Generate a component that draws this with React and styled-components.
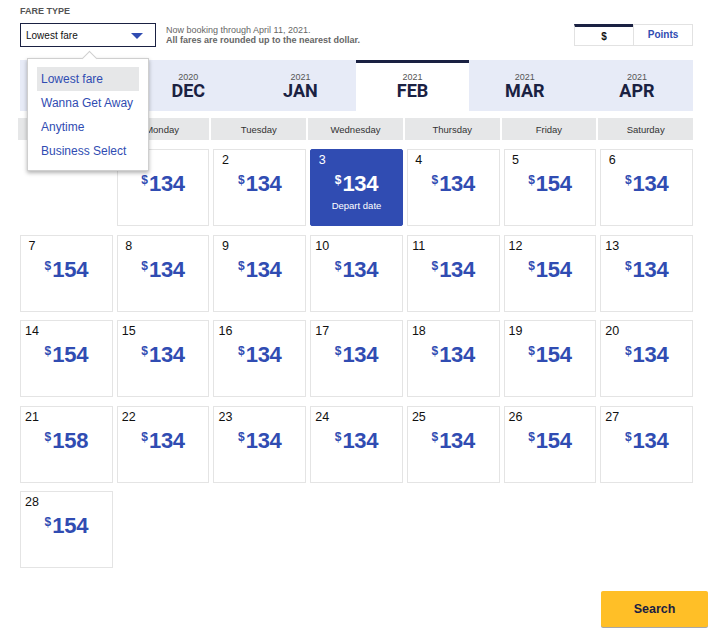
import React from "react";
import styled, { createGlobalStyle } from "styled-components";

const BLUE = "#304cb2";
const NAVY = "#1a2142";

const GlobalStyle = createGlobalStyle`
  html, body { margin: 0; padding: 0; background: #fff; }
  body { font-family: "Liberation Sans", Arial, sans-serif; color: #111; }
  * { box-sizing: border-box; }
`;

const Page = styled.div`
  width: 726px;
  padding: 6px 18px 8px 20px;
`;

const TopBar = styled.div`
  width: 673px;
  display: flex;
  justify-content: space-between;
  align-items: flex-end;
`;

const FareField = styled.div`
  display: flex;
  flex-direction: column;
`;

const FieldLabel = styled.div`
  font-size: 9px;
  line-height: 11px;
  font-weight: 700;
  color: #555;
  text-transform: uppercase;
  margin-bottom: 6px;
`;

const FieldRow = styled.div`
  display: flex;
  align-items: flex-start;
`;

const SelectWrap = styled.div`
  position: relative;
  z-index: 5;
`;

const SelectBox = styled.div`
  width: 136px;
  height: 24px;
  border: 1px solid ${NAVY};
  padding: 0 12px 0 5px;
  display: flex;
  align-items: center;
  justify-content: space-between;
  font-size: 10px;
  color: #111;
`;

const Arrow = styled.span`
  width: 0;
  height: 0;
  border-left: 6px solid transparent;
  border-right: 6px solid transparent;
  border-top: 6px solid ${BLUE};
  margin-top: 1px;
`;

const Menu = styled.ul`
  position: absolute;
  left: 7px;
  top: 35px;
  width: 122px;
  margin: 0;
  padding: 8px 9px 7px;
  list-style: none;
  background: #fff;
  border: 1px solid #cfcfcf;
  box-shadow: 0 2px 4px rgba(0, 0, 0, 0.3);

  &::before {
    content: "";
    position: absolute;
    top: -6px;
    left: 56px;
    width: 10px;
    height: 10px;
    background: #fff;
    border-top: 1px solid #cfcfcf;
    border-left: 1px solid #cfcfcf;
    transform: rotate(45deg);
  }
`;

const MenuItem = styled.li`
  height: 24px;
  line-height: 24px;
  padding-left: 4px;
  font-size: 12px;
  color: ${BLUE};
  background: ${(p) => (p.$active ? "#e6e7e8" : "transparent")};
  white-space: nowrap;
`;

const Note = styled.div`
  margin: 2px 0 0 10px;
  font-size: 9px;
  line-height: 10px;
  color: #666;
`;

const NoteStrong = styled.div`
  font-weight: 700;
`;

const Toggle = styled.div`
  display: flex;
  margin-bottom: 1px;
`;

const ToggleButton = styled.div`
  width: 60px;
  height: 22px;
  display: flex;
  align-items: center;
  justify-content: center;
  border: 1px solid #e2e2e2;
  border-top: ${(p) => (p.$active ? `3px solid ${NAVY}` : "1px solid #e2e2e2")};
  padding-bottom: ${(p) => (p.$active ? "0" : "2px")};
  margin-left: ${(p) => (p.$first ? "0" : "-1px")};
  font-size: 10px;
  font-weight: 700;
  color: ${(p) => (p.$active ? "#111" : BLUE)};
`;

const Tabs = styled.div`
  width: 673px;
  height: 51px;
  margin-top: 13px;
  display: grid;
  grid-template-columns: repeat(6, 1fr);
`;

const Tab = styled.div`
  display: flex;
  flex-direction: column;
  align-items: center;
  padding-top: 12px;
  background: ${(p) => (p.$active ? "#fff" : "#e7ebf7")};
  box-shadow: ${(p) => (p.$active ? `inset 0 3px 0 ${NAVY}` : "none")};
`;

const TabYear = styled.div`
  font-size: 9px;
  line-height: 10px;
  color: #555;
`;

const TabMonth = styled.div`
  font-family: Roboto, "Liberation Sans", Arial, sans-serif;
  font-size: 18px;
  line-height: 18px;
  font-weight: 700;
  color: ${NAVY};
`;

const WeekHeader = styled.div`
  width: 675px;
  margin: 7px 0 0 -2px;
  display: grid;
  grid-template-columns: repeat(7, 1fr);
  gap: 2px;
`;

const WeekDay = styled.div`
  height: 22px;
  background: #e6e7e8;
  display: flex;
  align-items: center;
  justify-content: center;
  font-size: 9.5px;
  color: #333;
`;

const Grid = styled.div`
  width: 673px;
  margin-top: 9px;
  display: grid;
  grid-template-columns: repeat(7, 1fr);
  column-gap: 4px;
  row-gap: 8.5px;
`;

const Cell = styled.div`
  height: 77px;
  padding-top: 3px;
  border: 1px solid ${(p) => (p.$selected ? BLUE : "#e4e4e4")};
  border-radius: ${(p) => (p.$selected ? "2px" : "0")};
  background: ${(p) => (p.$selected ? BLUE : "#fff")};
  color: ${(p) => (p.$selected ? "#fff" : "#111")};
  display: flex;
  flex-direction: column;
`;

const EmptyCell = styled.div`
  height: 77px;
`;

const DateNum = styled.div`
  width: 16px;
  margin-left: 3px;
  text-align: center;
  font-size: 12.5px;
  line-height: 14px;
`;

const Price = styled.div`
  margin-top: 5px;
  display: flex;
  justify-content: center;
  align-items: flex-start;
  color: ${(p) => (p.$selected ? "#fff" : BLUE)};
  font-weight: 700;
`;

const Dollar = styled.span`
  font-size: 12px;
  line-height: 14px;
  margin-top: 1px;
  margin-right: 1px;
`;

const Amount = styled.span`
  font-size: 22px;
  line-height: 24px;
  letter-spacing: -0.3px;
`;

const DepartLabel = styled.div`
  margin-top: 4px;
  text-align: center;
  font-size: 9.5px;
  line-height: 11px;
  color: #fff;
`;

const Footer = styled.div`
  display: flex;
  justify-content: flex-end;
  margin-top: 23px;
`;

const SearchButton = styled.button`
  width: 107px;
  height: 36px;
  border: none;
  border-radius: 2px;
  background: #ffbf27;
  box-shadow: 0 1px 0 #a8a8a8;
  font-family: "Liberation Sans", Arial, sans-serif;
  font-size: 12.5px;
  font-weight: 700;
  color: ${NAVY};
  cursor: pointer;
`;

const months = [
  { y: "2020", m: "NOV" },
  { y: "2020", m: "DEC" },
  { y: "2021", m: "JAN" },
  { y: "2021", m: "FEB", active: true },
  { y: "2021", m: "MAR" },
  { y: "2021", m: "APR" },
];

const weekDays = ["Sunday", "Monday", "Tuesday", "Wednesday", "Thursday", "Friday", "Saturday"];

const prices = {
  1: 134, 2: 134, 3: 134, 4: 134, 5: 154, 6: 134,
  7: 154, 8: 134, 9: 134, 10: 134, 11: 134, 12: 154, 13: 134,
  14: 154, 15: 134, 16: 134, 17: 134, 18: 134, 19: 154, 20: 134,
  21: 158, 22: 134, 23: 134, 24: 134, 25: 134, 26: 154, 27: 134,
  28: 154,
};

const fareOptions = ["Lowest fare", "Wanna Get Away", "Anytime", "Business Select"];

export default function App() {
  const days = [null];
  for (let d = 1; d <= 28; d++) days.push(d);

  return (
    <>
      <GlobalStyle />
      <Page>
        <TopBar>
          <FareField>
            <FieldLabel>Fare type</FieldLabel>
            <FieldRow>
              <SelectWrap>
                <SelectBox>
                  <span>Lowest fare</span>
                  <Arrow />
                </SelectBox>
                <Menu>
                  {fareOptions.map((o, i) => (
                    <MenuItem key={o} $active={i === 0}>
                      {o}
                    </MenuItem>
                  ))}
                </Menu>
              </SelectWrap>
              <Note>
                <div>Now booking through April 11, 2021.</div>
                <NoteStrong>All fares are rounded up to the nearest dollar.</NoteStrong>
              </Note>
            </FieldRow>
          </FareField>
          <Toggle>
            <ToggleButton $active $first>$</ToggleButton>
            <ToggleButton>Points</ToggleButton>
          </Toggle>
        </TopBar>

        <Tabs>
          {months.map((t) => (
            <Tab key={t.m} $active={t.active}>
              <TabYear>{t.y}</TabYear>
              <TabMonth>{t.m}</TabMonth>
            </Tab>
          ))}
        </Tabs>

        <WeekHeader>
          {weekDays.map((d) => (
            <WeekDay key={d}>{d}</WeekDay>
          ))}
        </WeekHeader>

        <Grid>
          {days.map((d, i) =>
            d === null ? (
              <EmptyCell key={`e${i}`} />
            ) : (
              <Cell key={d} $selected={d === 3}>
                <DateNum>{d}</DateNum>
                <Price $selected={d === 3}>
                  <Dollar>$</Dollar>
                  <Amount>{prices[d]}</Amount>
                </Price>
                {d === 3 && <DepartLabel>Depart date</DepartLabel>}
              </Cell>
            )
          )}
        </Grid>

        <Footer>
          <SearchButton>Search</SearchButton>
        </Footer>
      </Page>
    </>
  );
}
